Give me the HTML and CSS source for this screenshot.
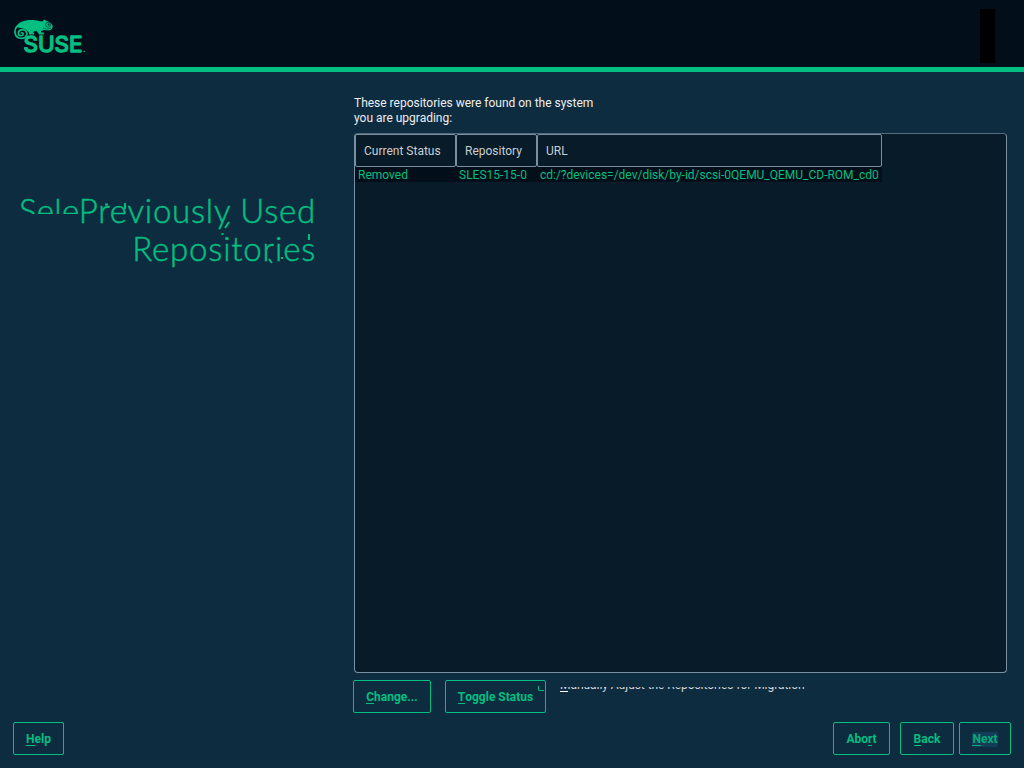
FILE: index.html
```html
<!DOCTYPE html>
<html lang="en">
<head>
<meta charset="utf-8">
<title>Previously Used Repositories</title>
<link rel="stylesheet" href="styles.css">
</head>
<body>
<header class="banner">
  <svg class="logo" width="74" height="36" viewBox="0 0 74 36" role="img" aria-label="SUSE">
    <path class="chameleon" d="M2 8C4 3 12 .300 21 1.200C25 1.600 27 2.500 29 2.200L30 .500L36 3.500C38 4.500 39 6.500 38.600 8.500C37.800 11.500 34 12 30 11C28 11.500 26.500 12 27 13.500H30V15.500H25L23 12.300L20 12.300L19 14H20V15.500H15V13.500C13 11 9 9 6 9Z"/>
    <path class="tail" d="M3 7C-.500 11.500 .500 18.500 6.200 19.300C11 20 14.500 16 12 12.300C9 9 4 11 4.300 14.700C5 17.500 9.500 17.500 9.200 14.700C9 13.500 7.500 13.300 7 14.500"/>
    <circle class="eye" cx="34.200" cy="5.700" r="2.500"/>
    <circle class="pupil" cx="34.700" cy="5.500" r="1"/>
    <path class="mouth" d="M29 9Q33 11.500 37 9"/>
    <text class="wordmark" x="9.500" y="33" textLength="59" lengthAdjust="spacingAndGlyphs">SUSE</text>
    <circle class="mark" cx="70.300" cy="32.500" r=".8"/>
  </svg>
  <div class="banner-block"></div>
</header>
<main class="content">
  <aside class="title-pane">
    <h1 class="title"><span class="line">Previously Used</span><span class="line">Repositories</span></h1>
    <span class="old-title">Selec</span>
    <svg class="residue" width="240" height="80" viewBox="0 0 240 80">
      <path d="M17 5.500h3M37 4v6M137 29l4-6M134.500 34v2M221 35v6M181 60l3 4M194 58v2"/>
    </svg>
  </aside>
  <section class="panel">
    <p class="intro">These repositories were found on the system<br>you are upgrading:</p>
    <div class="table-frame">
      <table class="repos">
        <thead><tr><th class="c-status">Current Status</th><th class="c-repo">Repository</th><th class="c-url">URL</th></tr></thead>
        <tbody><tr><td>Removed</td><td>SLES15-15-0</td><td class="url">cd:/?devices=/dev/disk/by-id/scsi-0QEMU_QEMU_CD-ROM_cd0</td></tr></tbody>
      </table>
    </div>
    <div class="actions">
      <button class="btn change"><span class="key">C</span>hange...</button>
      <button class="btn toggle"><span class="key">T</span>oggle Status<i class="corner"></i></button>
      <span class="option"><span class="option-text">Manually Adjust the Repositories for Migration</span></span>
    </div>
  </section>
</main>
<footer class="footer">
  <button class="btn help"><span class="key">H</span>elp</button>
  <button class="btn abort">Abo<span class="key">r</span>t</button>
  <button class="btn back"><span class="key">B</span>ack</button>
  <button class="btn next"><span class="focus"><span class="key">N</span>ext</span></button>
</footer>
</body>
</html>
```
FILE: styles.css
```css
* { box-sizing: border-box; }
body {
  margin: 0;
  width: 1024px;
  height: 768px;
  overflow: hidden;
  display: flex;
  flex-direction: column;
  background: #0d2c40;
  color: #eee;
  font: 12px/15px Roboto, sans-serif;
}
.banner {
  height: 72px;
  flex: none;
  display: flex;
  justify-content: space-between;
  padding: 9px 29px 0 14px;
  background: #020e19;
  border-bottom: 5px solid #02bf81;
}
.logo { margin-top: 10px; overflow: visible; }
.chameleon, .wordmark, .mark { fill: #02bf81; }
.wordmark {
  font: 400 21.5px Inter, sans-serif;
  stroke: #02bf81;
  stroke-width: 1.4px;
  stroke-linejoin: round;
}
.tail { fill: none; stroke: #02bf81; stroke-width: 1.6px; }
.eye { fill: #02bf81; stroke: #073d39; stroke-width: .8px; }
.pupil { fill: #073d39; }
.mouth { fill: none; stroke: #073d39; stroke-width: .6px; }
.banner-block { width: 15px; height: 54px; background: #000; }
.content { height: 650px; display: flex; }
.title-pane { width: 354px; flex: none; position: relative; padding: 119px 38px 0 0; }
.title, .old-title {
  color: #02bf81;
  font: 300 33px/38px Lato, sans-serif;
  -webkit-text-stroke: .5px #02bf81;
}
.title { margin: 0; text-align: right; }
.line { display: block; white-space: nowrap; letter-spacing: .8px; }
.old-title {
  position: absolute;
  left: 19px;
  top: 119px;
  width: 60px;
  height: 23px;
  overflow: hidden;
  letter-spacing: .3px;
}
.residue { position: absolute; left: 88px; top: 127px; overflow: visible; }
.residue path { fill: none; stroke: #02bf81; stroke-width: 2px; }
.panel { width: 654px; padding-top: 24px; }
.intro { margin: 0; height: 37px; letter-spacing: -.01px; }
.table-frame {
  width: 653px;
  height: 540px;
  border: 1px solid #7890a0;
  border-top-color: #536b7b;
  border-radius: 4px;
  background: #071b29;
}
.repos { border-collapse: separate; border-spacing: 0; table-layout: fixed; width: 527px; }
.repos th {
  height: 33px;
  padding: 2px 8px 0;
  border: 1px solid #7890a0;
  border-radius: 2px;
  color: #c9cdcf;
  font-weight: 400;
  text-align: left;
}
.c-status { width: 101px; }
.c-repo { width: 81px; }
.repos td { height: 15px; padding: 1px 3px 0; line-height: 14px; background: #020e19; color: #02bf81; white-space: nowrap; }
.repos .url { letter-spacing: -.01px; }
.actions { display: flex; margin: 7px 0 0 -1px; }
.btn {
  height: 33px;
  padding: 2px 0 0;
  flex: none;
  position: relative;
  border: 1px solid #02bf81;
  border-radius: 2px;
  background: transparent;
  color: #02bf81;
  font: 700 12px/15px Roboto, sans-serif;
}
.key { display: inline-block; height: 14px; border-bottom: 1px solid currentColor; }
.change { width: 78px; margin-right: 14px; }
.toggle { width: 101px; margin-right: 14px; }
.corner {
  position: absolute;
  left: 92px;
  top: 5px;
  width: 6px;
  height: 5px;
  border: solid #02bf81;
  border-width: 0 0 1px 1px;
  border-radius: 0 0 0 2px;
}
.option { height: 5px; margin-top: 7px; overflow: hidden; position: relative; }
.option-text { display: block; margin-top: -9px; white-space: nowrap; color: #d0d6d9; letter-spacing: -.05px; }
.option::after { content: ""; position: absolute; left: 0; bottom: 0; width: 8px; height: 1px; background: #fff; }
.footer { display: flex; padding: 0 13px; }
.help { width: 51px; margin-right: auto; }
.abort { width: 57px; margin-right: 10px; }
.back { width: 54px; margin-right: 5px; }
.next { width: 52px; }
.focus { display: inline-block; background: #123d58; border-radius: 2px; color: #05aa79; }
```
